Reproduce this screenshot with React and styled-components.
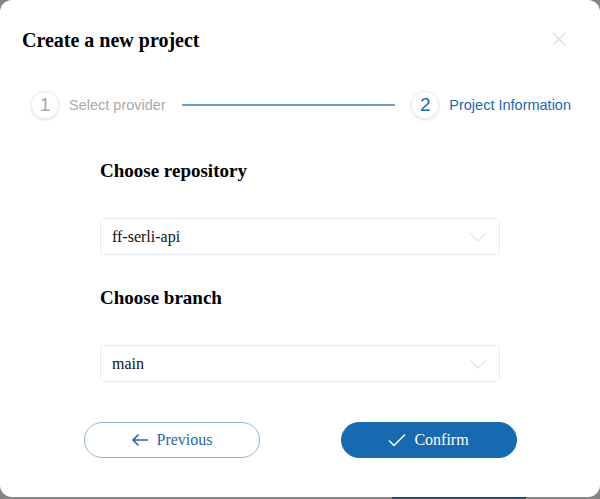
import styled, { createGlobalStyle } from "styled-components";

const GlobalStyle = createGlobalStyle`
  html, body {
    margin: 0;
    padding: 0;
    background-color: #858585;
  }
  * {
    box-sizing: border-box;
  }
`;

const Page = styled.div`
  width: 600px;
  height: 499px;
  overflow: hidden;
  background-color: #858585;
`;

const Modal = styled.div`
  height: 497px;
  background-color: #fff;
  border-radius: 12px;
  display: flex;
  flex-direction: column;
  font-family: "Liberation Serif", "Times New Roman", serif;
`;

const Backdrop = styled.div`
  height: 2px;
  padding-left: 392px;
`;

const BackdropButton = styled.div`
  width: 134px;
  height: 2px;
  background-color: #234c73;
`;

const Header = styled.div`
  display: flex;
  align-items: center;
  justify-content: space-between;
  padding: 28px 32px 0 22px;
`;

const Title = styled.h2`
  margin: 0;
  font-size: 20px;
  font-weight: bold;
  line-height: 24px;
  color: #000;
`;

const CloseBtn = styled.button`
  background: none;
  border: none;
  padding: 0;
  width: 16px;
  height: 16px;
  display: flex;
  cursor: pointer;
`;

const Stepper = styled.div`
  display: flex;
  align-items: center;
  padding: 39px 29px 0 31px;
`;

const Step = styled.div`
  display: flex;
  align-items: center;
  gap: 10px;
`;

const StepCircle = styled.div`
  width: 28px;
  height: 28px;
  border-radius: 50%;
  background-color: #fff;
  border: 1px solid #f0f0f0;
  box-shadow: 0 1px 3px rgba(0, 0, 0, 0.12);
  display: flex;
  align-items: center;
  justify-content: center;
  font-family: "Liberation Sans", Arial, sans-serif;
  font-size: 19px;
  color: ${(p) => (p.$active ? "#1c68b0" : "#a8a8a8")};
`;

const StepLabel = styled.span`
  font-family: "Liberation Sans", Arial, sans-serif;
  font-size: 14.5px;
  color: ${(p) => (p.$active ? "#1c68b0" : "#aaaaaa")};
`;

const StepLine = styled.div`
  flex: 1;
  height: 2px;
  background-color: #6a9fd0;
  margin: 0 16px;
`;

const Form = styled.div`
  width: 400px;
  margin: 40px auto 0;
  display: flex;
  flex-direction: column;
`;

const FieldLabel = styled.h3`
  margin: 0;
  font-size: 19px;
  font-weight: bold;
  line-height: 24px;
  color: #000;
`;

const SelectBox = styled.div`
  margin-top: 35px;
  margin-bottom: ${(p) => (p.$last ? "0" : "31px")};
  height: 37px;
  border: 1px solid #e4ebf4;
  border-radius: 5px;
  display: flex;
  align-items: center;
  justify-content: space-between;
  padding: 0 12px 0 11px;
  font-size: 16px;
  color: #111;
`;

const Actions = styled.div`
  display: flex;
  justify-content: center;
  gap: 81px;
  margin-top: 40px;
`;

const Button = styled.button`
  width: 176px;
  height: 36px;
  border-radius: 18px;
  display: flex;
  align-items: center;
  justify-content: center;
  gap: 8px;
  font-family: "Liberation Serif", "Times New Roman", serif;
  font-size: 16px;
  cursor: pointer;
  border: 1px solid ${(p) => (p.$primary ? "#1769b0" : "#8ab8e0")};
  background-color: ${(p) => (p.$primary ? "#1769b0" : "#fff")};
  color: ${(p) => (p.$primary ? "#fff" : "#1f67ad")};
`;

const Chevron = () => (
  <svg width="18" height="10" viewBox="0 0 18 10" fill="none">
    <path d="M1 1l8 8 8-8" stroke="#e2ebf5" strokeWidth="1.5" />
  </svg>
);

const App = () => {
  return (
    <Page>
      <GlobalStyle />
      <Modal>
        <Header>
          <Title>Create a new project</Title>
          <CloseBtn aria-label="close">
            <svg width="14" height="14" viewBox="0 0 14 14" fill="none">
              <path d="M1 1l12 12M13 1L1 13" stroke="#d3e2f1" strokeWidth="1.5" />
            </svg>
          </CloseBtn>
        </Header>

        <Stepper>
          <Step>
            <StepCircle>1</StepCircle>
            <StepLabel>Select provider</StepLabel>
          </Step>
          <StepLine />
          <Step>
            <StepCircle $active>2</StepCircle>
            <StepLabel $active>Project Information</StepLabel>
          </Step>
        </Stepper>

        <Form>
          <FieldLabel>Choose repository</FieldLabel>
          <SelectBox>
            ff-serli-api
            <Chevron />
          </SelectBox>
          <FieldLabel>Choose branch</FieldLabel>
          <SelectBox $last>
            main
            <Chevron />
          </SelectBox>
        </Form>

        <Actions>
          <Button>
            <svg width="18" height="14" viewBox="0 0 18 14" fill="none">
              <path d="M17 7H2M7.5 1.5L2 7l5.5 5.5" stroke="#1f67ad" strokeWidth="1.6" />
            </svg>
            Previous
          </Button>
          <Button $primary>
            <svg width="18" height="14" viewBox="0 0 18 14" fill="none">
              <path d="M1 7.5l5 5L17 1.5" stroke="#fff" strokeWidth="1.5" />
            </svg>
            Confirm
          </Button>
        </Actions>
      </Modal>
      <Backdrop>
        <BackdropButton />
      </Backdrop>
    </Page>
  );
};

export default App;
